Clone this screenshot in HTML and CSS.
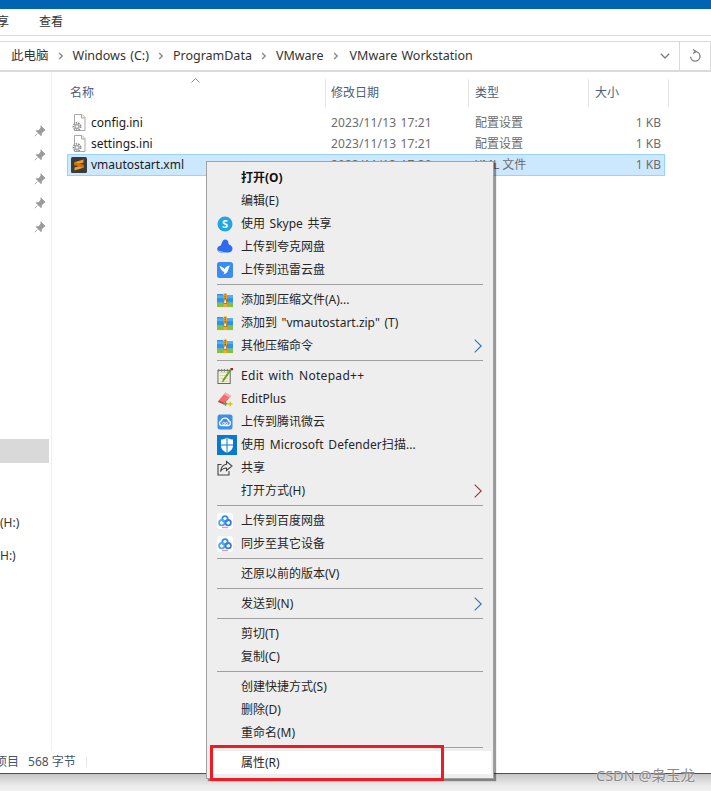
FILE: index.html
```html
<!DOCTYPE html>
<html lang="zh-CN">
<head>
<meta charset="utf-8">
<title>VMware Workstation</title>
<link rel="stylesheet" href="styles.css">
</head>
<body>
<svg class="defs" width="0" height="0" aria-hidden="true">
  <defs>
    <symbol id="ini" viewBox="0 0 16 18">
      <path d="M3.5.5h7.5l3 3v13H3.500z" fill="#fff" stroke="#a8a8a8"/>
      <path d="M10.500.5v3.500H14" fill="#eee" stroke="#a8a8a8"/>
      <circle cx="6" cy="12.500" r="3.700" fill="#fff" stroke="#8b8b8b" stroke-width="1.500" stroke-dasharray="1.600 1"/>
      <circle cx="6" cy="12.500" r="2.400" fill="#bdbdbd" stroke="#8f8f8f" stroke-width=".7"/>
      <circle cx="6" cy="12.500" r="1" fill="#fff"/>
    </symbol>
    <symbol id="rar" viewBox="0 0 17 16">
      <path d="M0 1.500h6l1 1.500h10v8H0z" fill="#2f93e0"/>
      <path d="M0 3h17v3H0z" fill="#55aef0"/>
      <path d="M0 11h17v4.500H0z" fill="#84c13a"/>
      <path d="M7 1h3.500v14.500H7z" fill="#f0a830"/>
      <path d="M8 2h1.500v1H8zm0 2h1.500v1H8zm0 2h1.500v1H8z" fill="#8a5a10"/>
      <rect x="7.300" y="8" width="3" height="3.500" fill="#fff3cf" stroke="#8a5a10" stroke-width=".7"/>
    </symbol>
    <symbol id="baidu" viewBox="0 0 16 16">
      <rect width="16" height="16" rx="3" fill="#fff"/>
      <circle cx="8" cy="5.800" r="2.700" fill="none" stroke="#2e8fe8" stroke-width="1.800"/>
      <circle cx="4.800" cy="9.700" r="2.700" fill="none" stroke="#4fa8f0" stroke-width="1.800"/>
      <circle cx="11.200" cy="9.700" r="2.700" fill="none" stroke="#3a7fe0" stroke-width="1.800"/>
      <path d="M5 14.500h6" stroke="#f08fa8" stroke-width="1.300"/>
    </symbol>
    <symbol id="pin" viewBox="0 0 12 12">
      <path d="M6.800.8l4.400 4.400-1.300.6-2.500 2.600-.3 2.400-5-5 2.400-.3 2.600-2.500zM3.500 8.500L.8 11.200" fill="#9a9a9a" stroke="#9a9a9a" stroke-width=".8"/>
    </symbol>
    <symbol id="crumb" viewBox="0 0 6 8">
      <path d="M1.200 1l3 3-3 3" fill="none" stroke="#8a8a8a" stroke-width="1.400"/>
    </symbol>
  </defs>
</svg>

<div class="window">
  <div class="titlebar"></div>
  <div class="ribbon"><span class="tab-cut">享</span><span>查看</span></div>
  <div class="address">
    <div class="crumbs">
      <span>此电脑</span><svg class="crumb"><use href="#crumb"/></svg>
      <span>Windows (C:)</span><svg class="crumb"><use href="#crumb"/></svg>
      <span>ProgramData</span><svg class="crumb"><use href="#crumb"/></svg>
      <span>VMware</span><svg class="crumb"><use href="#crumb"/></svg>
      <span class="crumb-last">VMware Workstation</span>
    </div>
    <svg class="drop" viewBox="0 0 10 6"><path d="M.8.8L5 5 9.200.8" fill="none" stroke="#808080" stroke-width="1.400"/></svg>
    <div class="refresh">
      <svg viewBox="0 0 12 14" width="12" height="14"><path d="M5.500 2.500h1a4.700 4.700 0 1 1-4.700 5" fill="none" stroke="#7d7d7d" stroke-width="1.300" transform="translate(-.2 .2)"/><path d="M4 .5l3 2-3 2" fill="none" stroke="#7d7d7d" stroke-width="1.300"/></svg>
    </div>
  </div>

  <div class="main">
    <nav class="nav">
      <div class="pin"><svg><use href="#pin"/></svg></div>
      <div class="pin"><svg><use href="#pin"/></svg></div>
      <div class="pin"><svg><use href="#pin"/></svg></div>
      <div class="pin"><svg><use href="#pin"/></svg></div>
      <div class="pin"><svg><use href="#pin"/></svg></div>
      <div class="nav-selected"></div>
      <div class="drive drive-a">(H:)</div>
      <div class="drive drive-b">H:)</div>
    </nav>
    <section class="list">
      <div class="head">
        <div class="head-cell head-name">名称<svg class="caret" viewBox="0 0 9 5"><path d="M.5 4.500l4-4 4 4" fill="none" stroke="#8a8a8a"/></svg></div>
        <div class="head-cell head-date">修改日期</div>
        <div class="head-cell">类型</div>
        <div class="head-cell">大小</div>
      </div>
      <div class="row">
        <div class="name"><svg class="file-icon"><use href="#ini"/></svg>config.ini</div>
        <div class="meta date">2023/11/13 17:21</div><div class="meta">配置设置</div><div class="meta">1 KB</div>
      </div>
      <div class="row">
        <div class="name"><svg class="file-icon"><use href="#ini"/></svg>settings.ini</div>
        <div class="meta date">2023/11/13 17:21</div><div class="meta">配置设置</div><div class="meta">1 KB</div>
      </div>
      <div class="row row-selected">
        <div class="name"><svg class="file-icon" viewBox="0 0 16 16"><rect width="16" height="16" rx="1.500" fill="#3b3b3b"/><path d="M12.500 2.500v3L3.500 8.300v-3zM12.500 7.700v3l-9 2.800v-3z" fill="#f89a1c"/><path d="M3.500 5.300l9 2.400v3l-9-2.400z" fill="#c9730f"/></svg>vmautostart.xml</div>
        <div class="meta date">2023/11/13 17:20</div><div class="meta">XML 文件</div><div class="meta">1 KB</div>
      </div>
    </section>
  </div>

  <div class="status"><span class="status-count">项目</span><span>568 字节</span><i class="status-sep"></i></div>
</div>
<div class="shadow-band"></div>

<div class="menu">
  <div class="item strong"><span class="ico"></span>打开(O)</div>
  <div class="item"><span class="ico"></span>编辑(E)</div>
  <div class="item"><span class="ico"><svg viewBox="0 0 16 16"><circle cx="8" cy="8" r="7.500" fill="#22a5e6"/><text class="skype-s" x="8" y="12">S</text></svg></span>使用 Skype 共享</div>
  <div class="item"><span class="ico"><svg viewBox="0 0 16 16"><path d="M5.500 2.500a3 3 0 0 1 5.500-.5c.6 1.400 0 2.500 1 3.500 1.500.5 3.500 1.800 3.500 4.200 0 2.300-1.800 3.800-4 3.800H4c-2.400 0-3.800-1.500-3.800-3.400C.2 8.300 1.800 7 3.500 6.800 4.400 5.500 4.700 4 5.500 2.500z" fill="#2d6cf0"/><path d="M.6 11c1 2 2.300 2.500 4 2.500h4.400C6.500 12.500 3 12.700.6 11z" fill="#b8c8ff"/></svg></span>上传到夸克网盘</div>
  <div class="item"><span class="ico"><svg viewBox="0 0 16 16"><rect width="16" height="16" rx="2.500" fill="#3b8bf5"/><path d="M2.500 4c2 .6 3.800 1.600 5 3 .8-1.600 2.400-2.900 5.500-3.500-.8 1.200-1.200 2.200-1.500 3.500-.5 3-2.500 5-5.500 5.500 1-1 1.300-1.800 1.200-2.600C5 9.300 3.300 7 2.500 4z" fill="#fff"/></svg></span>上传到迅雷云盘</div>
  <div class="sep"></div>
  <div class="item"><span class="ico"><svg><use href="#rar"/></svg></span>添加到压缩文件(A)...</div>
  <div class="item"><span class="ico"><svg><use href="#rar"/></svg></span>添加到 "vmautostart.zip" (T)</div>
  <div class="item"><span class="ico"><svg><use href="#rar"/></svg></span>其他压缩命令<svg class="arrow arrow-blue" viewBox="0 0 8 14"><path d="M.7.7L7.200 7 .7 13.300" fill="none" stroke-width="1.100"/></svg></div>
  <div class="sep"></div>
  <div class="item"><span class="ico"><svg viewBox="0 0 17 17"><rect x="1" y="2.500" width="13" height="14" fill="#f5f3d8" stroke="#5f5f5f"/><path d="M3 5h9M3 8h9M3 11h9M3 14h9" stroke="#c9c9a8" stroke-width=".8"/><path d="M2 1v3M5 1v3M8 1v3M11 1v3" stroke="#777" stroke-width="1"/><path d="M15 2.500L7.500 13l-1.500 2 .5-2.700L14 1.500z" fill="#7ab51d" stroke="#4c7a10" stroke-width=".6"/><path d="M14 0h3v2.500h-2z" fill="#8a2a2a"/></svg></span><span class="wide">Edit with Notepad++</span></div>
  <div class="item"><span class="ico"><svg viewBox="0 0 16 16"><path d="M2 9L8.500 1.500 14 5l-6 7z" fill="#ef6f6f"/><path d="M8.500 1.500L14 5l-1.500 1.700L7 3.200z" fill="#f7b0a8"/><path d="M2 9l6 3-1 1.500L1 11z" fill="#c93d3d"/><path d="M6.500 12.800h4M8.500 10.800v4" stroke="#5fa02a" stroke-width="1.500"/><path d="M11 13h4.500M13.200 10.800v4.500" stroke="#e3c120" stroke-width="1.500"/></svg></span>EditPlus</div>
  <div class="item"><span class="ico"><svg viewBox="0 0 16 16"><rect x=".5" y=".5" width="15" height="15" rx="2.500" fill="#3d8fe8"/><path d="M4.500 11.500a2.300 2.300 0 0 1-.3-4.500 3.900 3.900 0 0 1 7.500 0 2.300 2.300 0 0 1-.2 4.500z" fill="none" stroke="#fff" stroke-width="1.300"/><circle cx="6.700" cy="9.500" r="1.100" fill="none" stroke="#fff"/><circle cx="9.500" cy="9.500" r="1.100" fill="none" stroke="#fff"/></svg></span>上传到腾讯微云</div>
  <div class="item"><span class="ico ico-wide"><svg viewBox="0 0 20 20"><rect width="20" height="20" fill="#0b78d0"/><path d="M10 2.500c2 1.500 4 2 6 2v6c0 3.500-2.500 5.800-6 7.200-3.500-1.400-6-3.700-6-7.200v-6c2 0 4-.5 6-2z" fill="#fff"/><path d="M9.500 2.500h1v15.200h-1zM4 9.500h12v1H4z" fill="#0b78d0"/></svg></span><span class="wide-thin">使用 Microsoft Defender扫描...</span></div>
  <div class="item"><span class="ico"><svg viewBox="0 0 16 16"><path d="M4.500 4.500H1v10.500h11V11" fill="none" stroke="#444" stroke-width="1.100"/><path d="M9.500 1.500L15 6l-5.500 4.500V8C7 8 5 9 3.500 11.500 4 7.500 6 4.800 9.500 4.300z" fill="none" stroke="#444" stroke-width="1.100"/></svg></span>共享</div>
  <div class="item"><span class="ico"></span>打开方式(H)<svg class="arrow arrow-red" viewBox="0 0 8 14"><path d="M.7.7L7.200 7 .7 13.300" fill="none" stroke-width="1.100"/></svg></div>
  <div class="sep"></div>
  <div class="item"><span class="ico"><svg><use href="#baidu"/></svg></span>上传到百度网盘</div>
  <div class="item"><span class="ico"><svg><use href="#baidu"/></svg></span>同步至其它设备</div>
  <div class="sep"></div>
  <div class="item"><span class="ico"></span>还原以前的版本(V)</div>
  <div class="sep"></div>
  <div class="item"><span class="ico"></span>发送到(N)<svg class="arrow arrow-blue" viewBox="0 0 8 14"><path d="M.7.7L7.200 7 .7 13.300" fill="none" stroke-width="1.100"/></svg></div>
  <div class="sep"></div>
  <div class="item"><span class="ico"></span>剪切(T)</div>
  <div class="item"><span class="ico"></span>复制(C)</div>
  <div class="sep"></div>
  <div class="item"><span class="ico"></span>创建快捷方式(S)</div>
  <div class="item"><span class="ico"></span>删除(D)</div>
  <div class="item"><span class="ico"></span>重命名(M)</div>
  <div class="sep"></div>
  <div class="item item-active"><span class="ico"></span>属性(R)</div>
</div>
<div class="callout"></div>
<div class="watermark">CSDN @枭玉龙</div>
</body>
</html>
```

FILE: styles.css
```css
* { box-sizing: border-box; }
html, body { margin: 0; padding: 0; }
body {
  width: 711px;
  height: 791px;
  overflow: hidden;
  position: relative;
  background: #fff;
  font: 12px/16px "Noto Sans", "Noto Sans CJK SC", sans-serif;
  color: #1a1a1a;
}
.defs { position: absolute; }
.window { height: 774px; display: flex; flex-direction: column; overflow: hidden; border-bottom: 1px solid #0063b1; }
.titlebar { height: 9px; background: #0063b1; flex: none; }
.ribbon {
  height: 27px; flex: none;
  display: flex; align-items: center; gap: 30px;
  border-bottom: 1px solid #dadada;
  color: #333;
}
.tab-cut { margin-left: -3px; }

.address {
  height: 31px; flex: none;
  margin: 5px 0 0 -1px;
  border: 2px solid #dadada;
  border-width: 1px 1px 2px 1px;
  display: flex; align-items: center;
}
.crumbs { display: flex; align-items: center; padding-left: 11px; flex: 1; font-size: 12.5px; word-spacing: 1px; color: #333; }
.crumb { width: 6px; height: 8px; margin: 0 9px 0 9px; }
.crumb-last { margin-left: 2px; }
.drop { width: 10px; height: 6px; margin-right: 9px; }
.refresh { width: 31px; height: 100%; border-left: 1px solid #dadada; display: flex; align-items: center; justify-content: center; }

.main { flex: 1; display: flex; min-height: 0; }
.nav { width: 52px; flex: none; border-right: 1px solid #f0f0f0; padding-top: 47px; }
.pin { height: 24px; display: flex; align-items: center; justify-content: flex-end; padding-right: 5px; }
.pin svg { width: 12px; height: 12px; }
.nav-selected { height: 24px; width: 49px; margin-top: 200px; background: #d9d9d9; }
.drive { height: 24px; line-height: 24px; color: #333; overflow: hidden; }
.drive-a { margin-top: 48px; }
.drive-b { margin-top: 9px; }

.list { flex: 1; min-width: 0; padding-top: 7px; }
.head {
  display: grid; grid-template-columns: 256px 143px 120px 80px;
  height: 26px; margin: 0 0 7px 18px;
  color: #4c607a;
}
.head-cell { border-right: 1px solid #e5e5e5; line-height: 28px; padding-left: 6px; position: relative; }
.head-name { padding-left: 0; }
.head-date { padding-left: 5px; }
.caret { position: absolute; left: 121px; top: -1px; width: 9px; height: 5px; }

.row {
  display: grid; grid-template-columns: 260px 144px 1fr auto;
  align-items: center;
  height: 21px; width: 598px;
  margin-left: 15px;
  padding: 0 3px 0 3px;
  border: 1px solid transparent;
  color: #6d6d6d;
}
.row-selected { height: 22px; background: #cce8ff; border-color: #99d1ff; }
.name { display: flex; align-items: center; gap: 4px; color: #1a1a1a; }
.date { word-spacing: 1px; letter-spacing: .13px; }
.file-icon { width: 16px; height: 18px; flex: none; }
.row-selected .file-icon { height: 16px; }

.status { height: 22px; flex: none; display: flex; align-items: center; color: #44546a; padding-bottom: 1px; }
.status-count { margin-left: -5px; margin-right: 9px; }
.status-sep { width: 1px; height: 10px; background: #e5e5e5; margin-left: 10px; }
.shadow-band { height: 17px; background: linear-gradient(#c6c6c6, #ececec 70%, #f0f0f0); }

.menu {
  position: absolute; left: 206px; top: 161px; width: 288px;
  background: #eee;
  border: 1px solid #a0a0a0;
  padding: 4px 2px 4px 3px;
  box-shadow: 2px 2px 1px rgba(0,0,0,.4);
  color: #262626;
  word-spacing: 1.5px;
}
.item { height: 23px; display: flex; align-items: center; padding-left: 7px; padding-right: 9px; }
.strong { font-weight: 700; color: #111; }
.item-active { background: #fff; }
.wide { letter-spacing: .3px; }
.wide-thin { letter-spacing: .07px; }
.ico { width: 24px; height: 16px; flex: none; display: flex; align-items: center; }
.ico svg { width: 16px; height: 16px; overflow: visible; }
.ico-wide svg { width: 20px; height: 20px; }
.skype-s { font: 700 11px "Noto Sans", sans-serif; fill: #fff; text-anchor: middle; }
.sep { height: 1px; margin: 3px 8px 3px 7px; background: #a0a0a0; }
.arrow { width: 8px; height: 14px; margin-left: auto; }
.arrow-blue { stroke: #2f6fb0; }
.arrow-red { stroke: #8a3a3a; }

.callout {
  position: absolute; left: 210px; top: 745px; width: 234px; height: 36px;
  border: 3px solid #ed1c24;
}
.watermark {
  position: absolute; left: 596px; top: 766px;
  font-size: 14.5px; line-height: 18px;
  color: #8a8a8a;
  text-shadow: 0 0 2px #fff;
}
```
